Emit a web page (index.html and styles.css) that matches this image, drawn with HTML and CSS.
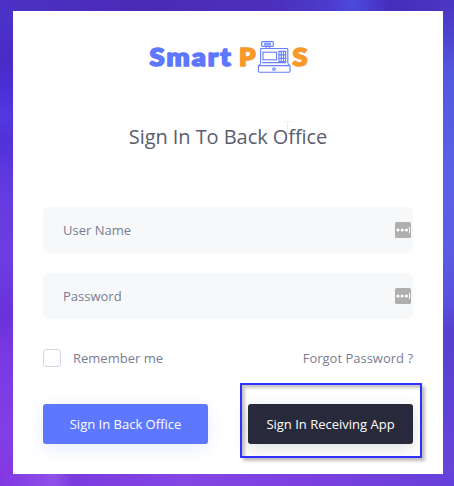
FILE: index.html
```html
<!DOCTYPE html>
<html lang="en">
<head>
<meta charset="utf-8">
<title>Smart POS - Sign In</title>
<link rel="stylesheet" href="styles.css">
</head>
<body>
<main class="card">
  <svg class="logo" width="164" height="38" viewBox="147 38 164 38" role="img" aria-label="Smart POS">
    <g class="wordmark">
      <text class="blue" transform="translate(149.4 66.2) scale(1.12 1)" textLength="72.6" lengthAdjust="spacing">Smart</text>
      <text class="orange" x="239" y="66.2" textLength="16.5" lengthAdjust="spacingAndGlyphs">P</text>
      <text class="orange" x="292.6" y="66.2" textLength="15" lengthAdjust="spacingAndGlyphs">S</text>
    </g>
    <g class="register">
      <rect x="261.7" y="41.6" width="11.6" height="4.8" rx=".8"/>
      <path d="M264 43.2h7M264 44.8h7M266 46.5v2.2M269.3 46.5v2.2"/>
      <path d="M260.6 63.8V49.2q0-.7.7-.7h25.6q.9 0 .9.9v14.4M262.2 62.6h23.8"/>
      <rect x="263" y="52.2" width="13.6" height="7.6"/>
      <path d="M260.6 63.8l-2.2 2.3v5.2q0 .9.9.9h29.9q.9 0 .9-.9v-5.2l-2.2-2.3M258.4 65.6h31.5"/>
      <circle cx="274" cy="69" r="1.3"/>
      <path d="M278.9 51.3h6.8v10.4h-6.8zM278.9 54.8h6.8M278.9 58.3h6.8M281.2 51.3v10.4M283.5 51.3v10.4"/>
    </g>
  </svg>
  <h1 class="title">Sign In To Back Office</h1>
  <svg class="ibeam" width="8" height="18" viewBox="0 0 8 18"><path d="M.5 .5h7M3.5 .5v16"/></svg>
  <form class="form">
    <div class="field"><span>User Name</span>
      <svg class="key" width="16" height="16" viewBox="0 0 16 16"><rect width="16" height="16" rx="1.5"/><g><circle cx="3" cy="8" r="1.6"/><circle cx="7.2" cy="8" r="1.6"/><circle cx="11.4" cy="8" r="1.6"/><path d="M14 5h1v6h-1z"/></g></svg>
    </div>
    <div class="field"><span>Password</span>
      <svg class="key" width="16" height="16" viewBox="0 0 16 16"><rect width="16" height="16" rx="1.5"/><g><circle cx="3" cy="8" r="1.6"/><circle cx="7.2" cy="8" r="1.6"/><circle cx="11.4" cy="8" r="1.6"/><path d="M14 5h1v6h-1z"/></g></svg>
    </div>
    <div class="options">
      <label class="remember"><span class="box"></span>Remember me</label>
      <a class="forgot">Forgot Password ?</a>
    </div>
    <div class="actions">
      <button type="button" class="btn primary">Sign In Back Office</button>
      <div class="marked">
        <button type="button" class="btn dark">Sign In Receiving App</button>
        <span class="marker"></span>
      </div>
    </div>
  </form>
</main>
</body>
</html>
```
FILE: styles.css
```css
* { box-sizing: border-box; }
html { background: #5d38dc; }
body {
  margin: 0;
  height: 486px;
  overflow: hidden;
  padding: 11px 11px 12px 13px;
  font: 13px/20px "Open Sans", "Noto Sans", sans-serif;
  color: #7a7d91;
  background:
    linear-gradient(90deg, #4d31c6, #482bb5 30%, #4c2fbb 60%, #4b3bcb 72%, #4d49dc 78%, #452dbb 86%, #4c36c4) 0 0 / 100% 11px no-repeat,
    linear-gradient(90deg, #8137e2, #8f50e8 12%, #7c3ade 16%, #8446e5 40%, #7a40df 70%, #6540da) 0 100% / 100% 12px no-repeat,
    linear-gradient(#4b35c3, #4d42cf 7%, #5358e0 15%, #5b61e6 36%, #5b5de5 50%, #5a50df 62%, #5640cf 68%, #6042d8 85%, #6843d9) 100% 0 / 11px 100% no-repeat,
    linear-gradient(#4c34c8, #482cc5 12%, #4b2ed6 18%, #5338e0 24%, #5031d8 29%, #623be0 38%, #6c3edf 53%, #6932d7 65%, #7938e2 72%, #8040e4 88%, #8538df);
}
.card {
  position: relative;
  width: 430px;
  height: 463px;
  padding: 27px 30px 0;
  background: #fff;
}
.logo { display: block; margin: 0 auto 0 104px; }
.wordmark text {
  font: 900 24.5px Lato, sans-serif;
  stroke-width: 1.7;
  stroke-linejoin: round;
}
.blue { fill: #5d78ff; stroke: #5d78ff; }
.orange { fill: #f8992a; stroke: #f8992a; }
.register { fill: none; stroke: #6681fa; stroke-width: 1.15; }
.title {
  margin: 46px 0 0;
  font-size: 20px;
  font-weight: 400;
  line-height: 30px;
  letter-spacing: -.06px;
  text-align: center;
  color: #595d6e;
}
.ibeam { position: absolute; left: 271px; top: 110px; fill: none; stroke: #ededed; }
.form { margin-top: 55px; }
.field {
  display: flex;
  align-items: center;
  justify-content: space-between;
  height: 46px;
  margin-bottom: 20px;
  padding: 0 2px 0 20px;
  border-radius: 6px;
  background: #f7f8fa;
}
.key { fill: #afafaf; }
.key g { fill: #fff; }
.options {
  display: flex;
  justify-content: space-between;
  align-items: center;
  height: 20px;
  margin-top: 29px;
}
.remember { display: flex; align-items: center; gap: 12px; }
.box { width: 18px; height: 18px; border: 1px solid #d1d7e2; border-radius: 3px; }
.actions { display: flex; justify-content: space-between; margin-top: 36px; }
.btn {
  display: block;
  width: 165px;
  height: 40px;
  padding: 0;
  border: 0;
  border-radius: 3px;
  font: inherit;
  color: #fff;
}
.primary { background: #5d78ff; box-shadow: 0 4px 16px rgba(93, 120, 255, .15); }
.dark { background: #282a3c; box-shadow: 0 4px 16px rgba(40, 42, 60, .15); }
.marked { position: relative; }
.marker {
  position: absolute;
  inset: -21px -9px -14px -8px;
  border: 2px solid #3030ff;
  box-shadow: 3px 3px 3px rgba(0, 0, 0, .25), inset 3px 3px 3px rgba(0, 0, 0, .22);
}
```
